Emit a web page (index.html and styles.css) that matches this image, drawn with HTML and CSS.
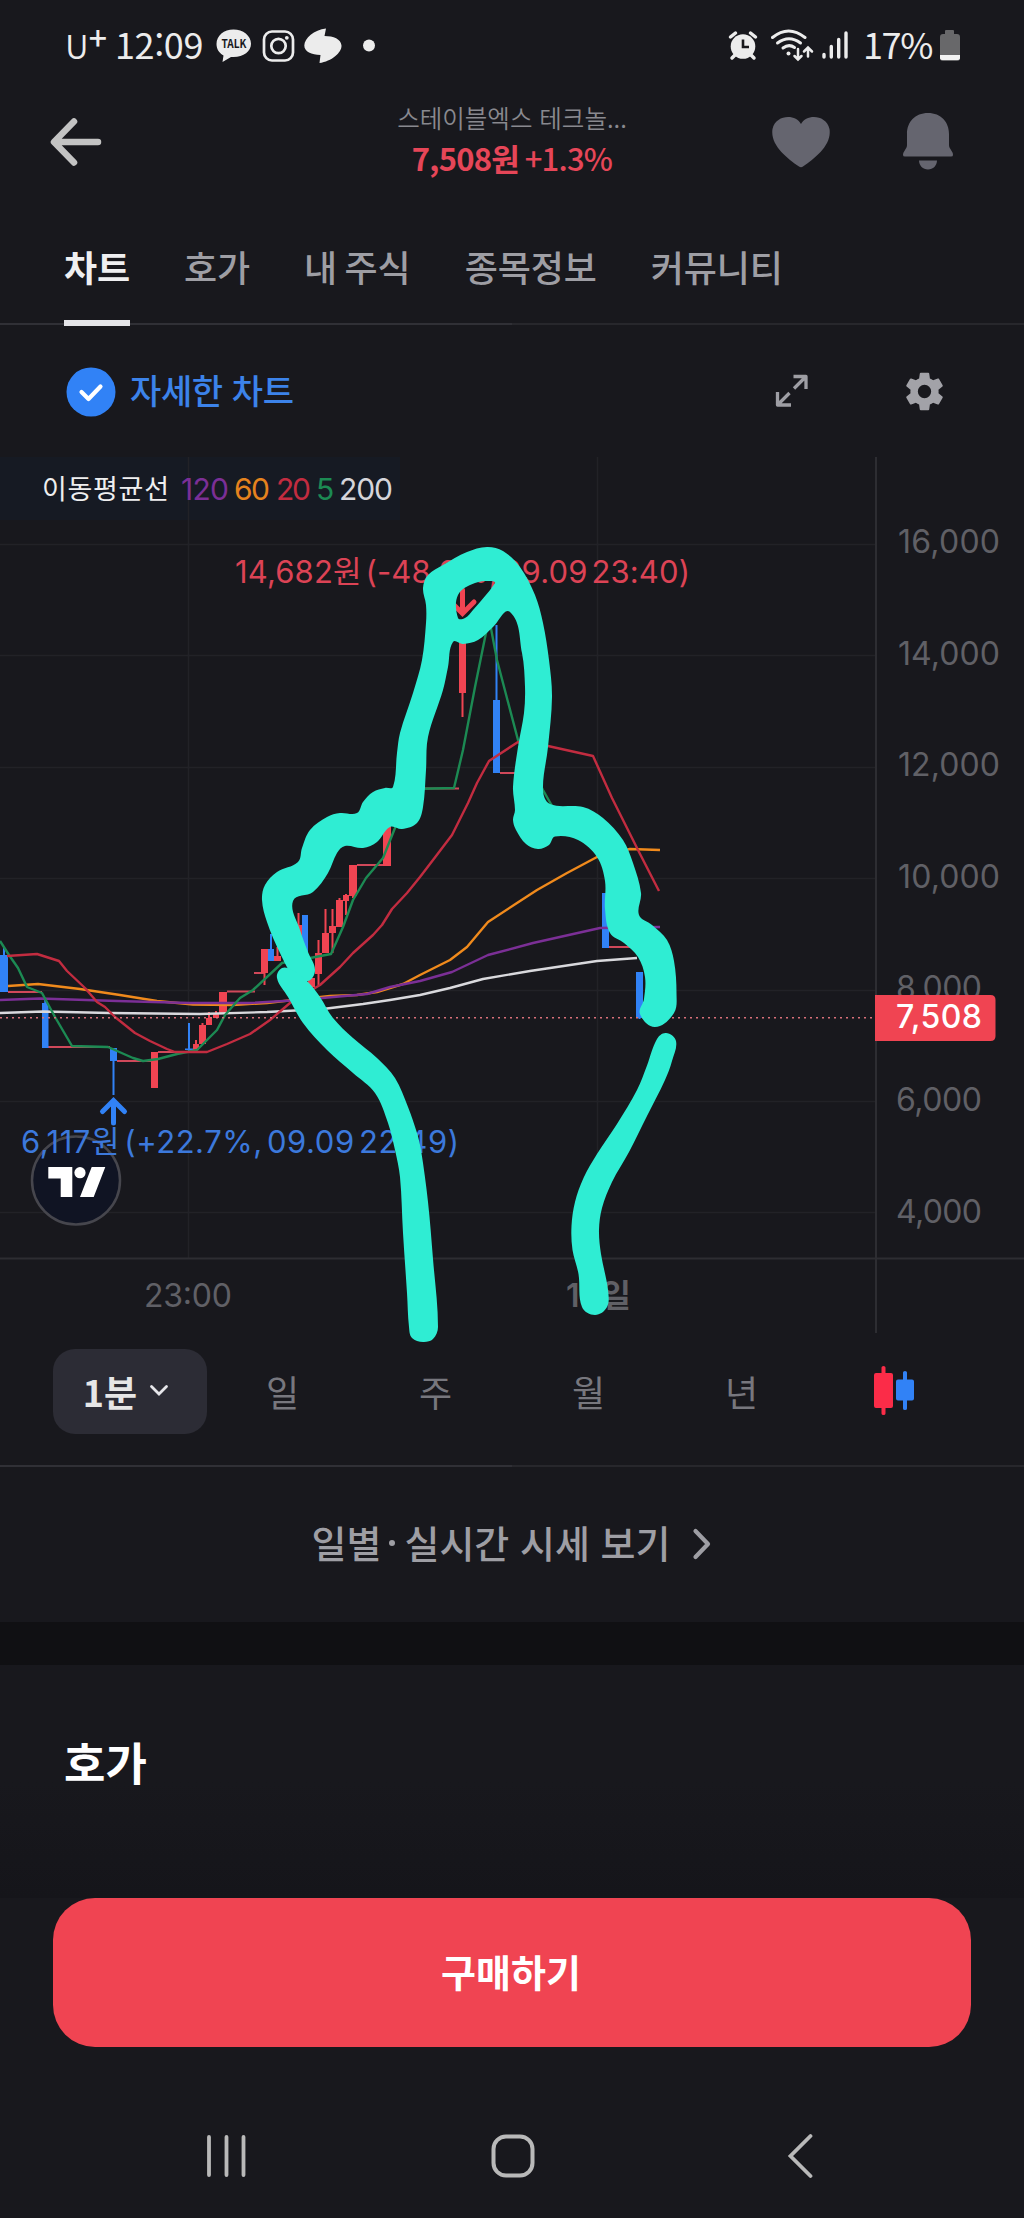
FILE: index.html
```html
<!DOCTYPE html>
<html lang="ko">
<head>
<meta charset="utf-8">
<title>차트</title>
<link rel="stylesheet" href="styles.css">
</head>
<body>
<div class="screen">
  <div class="status">
    <span class="carrier">U<sup>+</sup></span>
    <span class="clock">12:09</span>
    <svg class="notices" width="166" height="40" viewBox="212 25 166 40">
      <path fill="#ececec" d="M233.500 29.500C224 29.500 216.500 35.500 216.500 44c0 5 2.500 9 7 11.500L222.500 62l8.500-5c11.500 1 20-5 20-13.200C251 35.500 243 29.500 233.500 29.500z"/>
      <text x="221.500" y="48" class="talk" textLength="25" lengthAdjust="spacingAndGlyphs">TALK</text>
      <g fill="none" stroke="#ececec" stroke-width="2.700"><rect x="264" y="31.500" width="29" height="29" rx="8"/><circle cx="278.500" cy="46" r="7.200"/></g>
      <circle cx="286.800" cy="37.800" r="1.900" fill="#ececec"/>
      <path fill="#ececec" d="M326 28.500L324.500 36c9 0 16.500 3 17 9.500c.5 7-10 16-22 17.500L320.500 55c-9 0-16.200-3.500-16.200-9.500C304.500 38 314 30 326 28.500z"/>
      <circle cx="369" cy="45.500" r="6" fill="#ececec"/>
    </svg>
    <svg class="signals" width="122" height="40" viewBox="728 25 122 40">
      <g fill="#ececec"><circle cx="743" cy="46.500" r="12.300"/></g>
      <path d="M735 55l-3 3M751 55l3 3M730.500 37l5-4M755.500 37l-5-4" stroke="#ececec" stroke-width="3.500" stroke-linecap="round"/>
      <path d="M743 39.500v7.500h6" fill="none" stroke="#18181c" stroke-width="2.600"/>
      <g fill="none" stroke="#ececec" stroke-width="3" stroke-linecap="round"><path d="M772.500 37.500q16-13 32.500 0"/><path d="M777.500 43q11.500-8.500 23 0"/><path d="M783 48q6-4.500 11.500-.5"/></g>
      <circle cx="788.500" cy="53.500" r="2" fill="#ececec"/>
      <path d="M798 49v10M794.500 56l3.500 3.500 3.500-3.500M808 56.500v-8.500M804 51.500l4-4 4 4" fill="none" stroke="#ececec" stroke-width="2.500" stroke-linecap="round"/>
      <path d="M824 54.500v2.500M831.300 46.500v10.500M838.700 39.500v17.500M846 33v24" stroke="#ececec" stroke-width="3.400" stroke-linecap="round"/>
    </svg>
    <span class="charge">17%</span>
    <svg class="battery" width="22" height="32" viewBox="0 0 22 32"><path fill="#68686a" d="M6 1q0-1 1-1h7q1 0 1 1v3h3q3 0 3 3v21q0 3-3 3H4q-3 0-3-3V7q0-3 3-3h2z"/><path fill="#f2f2f2" d="M1 25h20v3q0 2-3 2H4q-3 0-3-2z"/></svg>
  </div>

  <header class="top">
    <svg width="54" height="50" viewBox="0 0 54 50"><path d="M48 25H5M24 4.500L4 25l20 20.500" fill="none" stroke="#c3c3c3" stroke-width="6.500" stroke-linecap="round" stroke-linejoin="round"/></svg>
    <div class="stock"><div class="name">스테이블엑스 테크놀...</div><div class="quote"><b>7,508원</b> <span>+1.3%</span></div></div>
    <div class="actions">
      <svg width="58" height="52" viewBox="0 0 58 52"><path fill="#65656f" d="M29 8C24-2 4-2 .5 13C-2 29 15 42 27 50.500Q29 51.800 31 50.500C43 42 60 29 57.500 13C54-2 34-2 29 8z"/></svg>
      <svg width="52" height="58" viewBox="0 0 52 58"><path fill="#65656f" d="M26 0C13 0 5 9 5 21v11c0 4-4 6-4 10q0 1.500 2 1.500h46q2 0 2-1.500c0-4-4-6-4-10V21C47 9 39 0 26 0zM17 47.500h18c0 5-4 9-9 9s-9-4-9-9z"/></svg>
    </div>
  </header>

  <nav class="tabs"><span class="tab on">차트</span><span class="tab">호가</span><span class="tab">내 주식</span><span class="tab">종목정보</span><span class="tab">커뮤니티</span></nav>

  <div class="tools">
    <svg width="50" height="50" viewBox="0 0 50 50"><circle cx="25" cy="25" r="24.500" fill="#3182f6"/><path d="M15.500 25l7 7L34.500 19.500" fill="none" stroke="#fff" stroke-width="4.200" stroke-linecap="round" stroke-linejoin="round"/></svg>
    <span class="detail">자세한 차트</span>
    <svg class="expand" width="34" height="34" viewBox="0 0 34 34"><g fill="none" stroke="#9e9ea4" stroke-width="3.300" stroke-linejoin="round"><path d="M18.500 2.500h12.500v12.500M19 14.500L31 2.500"/><path d="M2.500 18v13H16M2.500 31L14.500 19"/></g></svg>
    <svg class="gear" width="47" height="47" viewBox="0 0 24 24"><path fill="#a2a2a8" d="M19.140 12.940c.04-.3.06-.61.06-.94 0-.32-.02-.64-.07-.94l2.030-1.580c.18-.14.23-.41.12-.61l-1.920-3.320c-.12-.22-.37-.29-.59-.22l-2.390.96c-.5-.38-1.030-.7-1.620-.94l-.36-2.540c-.04-.24-.24-.41-.48-.41h-3.840c-.24 0-.43.17-.47.41l-.36 2.540c-.59.24-1.130.57-1.620.94l-2.390-.96c-.22-.08-.47 0-.59.22L2.740 8.870c-.12.21-.08.47.12.61l2.030 1.580c-.05.3-.09.63-.09.94s.02.64.07.94l-2.030 1.580c-.18.14-.23.41-.12.61l1.920 3.320c.12.22.37.29.59.22l2.390-.96c.5.38 1.030.7 1.620.94l.36 2.540c.05.24.24.41.48.41h3.840c.24 0 .44-.17.47-.41l.36-2.540c.59-.24 1.130-.56 1.620-.94l2.390.96c.22.08.47 0 .59-.22l1.920-3.320c.12-.22.07-.47-.12-.61l-2.010-1.580zM12 15.400a3.400 3.400 0 1 1 0-6.800 3.400 3.400 0 0 1 0 6.800z"/></svg>
  </div>

  <svg class="chart" width="1024" height="876" viewBox="0 457 1024 876">
    <path class="legend-bg" d="M0 457h400v63H0z"/>
    <path class="grid" d="M0 544.500h876M0 655.500h876M0 767.500h876M0 878.500h876M0 990.500h876M0 1101.500h876M0 1212.500h876M188.500 457v801M597.500 457v801"/>
    <path class="axis" d="M0 1258.500h1024M876 457v876"/>
    <g id="candles"></g>
    <g class="ma">
      <polyline stroke="#d9d9dd" points="0,1013 43,1011.500 110,1013 200,1014 267,1012 323,1009 363,1004 390,1000 420,995 450,988 483,979 530,971 597,961 637,958"/>
      <polyline stroke="#f08a1c" points="8,986 38,984 80,989 120,995 157,1001 193,1004.500 233,1005 267,1003 293,1000 330,996 357,995 377,992 403,984 420,975 430,970 450,960 467,947 488,922 517,903 537,890 567,873 597,857 630,849 660,850"/>
      <polyline stroke="#7b2f96" points="0,1000 40,998.500 117,1001 190,1003 250,1003 300,1000 367,994 390,987 420,981 452,972 488,955 533,943 600,928 660,927"/>
      <polyline stroke="#1c8a53" points="0,941 9,955 18,968 27,987 42,993 55,1017 72,1046 108,1047 133,1058 143,1061 158,1059 177,1054 197,1050 217,1030 225,1015 240,998 253,990 282,963 310,958 331,954 343,927 353,900 366,878 383,858 395,828 412,789 454,788 463,750 475,687 489,618 497,660 503,683 518,740 543,790 560,820"/>
      <polyline stroke="#c22c40" points="7,956 37,954 59,961 67,971 85,988 97,1002 105,1007 115,1017 135,1033 150,1041 167,1049 175,1052 207,1052 227,1044 250,1034 270,1020 290,1003 320,985 340,967 353,953 373,935 382,925 392,909 407,893 420,877 433,860 452,835 468,803 477,783 489,761 518,742 548,746 593,756 612,798 628,830 638,850 659,891"/>
    </g>
    <path class="last" d="M0 1017.700h876"/>
    <g class="mark up"><path d="M462.500 590v22M451 602l11.500 11.500 11.500-11.500"/></g>
    <g class="mark down"><path d="M113.500 1123v-22M102.500 1111.500l11-11 11 11"/></g>
    <circle cx="76" cy="1180.500" r="44" fill="#101423" stroke="#46464d" stroke-width="2.500"/>
    <path fill="#fff" d="M48.300 1167h24v30H60.700v-18.500H48.300zM91.700 1167h13.600L93.700 1197H80z"/><circle cx="80" cy="1172.700" r="5.600" fill="#fff"/>
    <g class="num">
      <text class="peak" x="235" y="583" fill="#dc4355" textLength="455">14,682원 (-48.9%, 09.09 23:40)</text>
      <text class="peak" x="21" y="1153" fill="#3c79dc" textLength="438">6,117원 (+22.7%, 09.09 22:49)</text>
      <text class="ma-name" x="42" y="499" textLength="127">이동평균선</text>
      <text x="181" y="499.500" fill="#7b2f96" textLength="48">120</text>
      <text x="234" y="499.500" fill="#e5831e" textLength="36">60</text>
      <text x="276" y="499.500" fill="#c22c40" textLength="35">20</text>
      <text x="316" y="499.500" fill="#1c8a53">5</text>
      <text x="339" y="499.500" fill="#d5d5da" textLength="54">200</text>
    </g>
    <g class="scale">
      <text x="898" y="553" textLength="102">16,000</text>
      <text x="898" y="665" textLength="102">14,000</text>
      <text x="898" y="776" textLength="102">12,000</text>
      <text x="898" y="888" textLength="102">10,000</text>
      <text x="896" y="999" textLength="86">8,000</text>
      <text x="896" y="1111" textLength="86">6,000</text>
      <text x="896" y="1223" textLength="86">4,000</text>
      <text x="144" y="1307" textLength="88">23:00</text>
      <text x="566" y="1307" textLength="65" class="day">10일</text>
    </g>
    <path fill="#f04452" d="M875 995h115.500q5 0 5 5v36q0 5-5 5H875z"/>
    <text class="price" x="896" y="1028" textLength="86">7,508</text>
    <path id="brush" fill="#2fedd3" fill-rule="evenodd"/>
  </svg>

  <div class="periods">
    <span class="period on">1분<svg width="20" height="13" viewBox="0 0 20 13"><path d="M2.500 2.500L10 10l7.500-7.500" fill="none" stroke="#e6e6ea" stroke-width="2.800" stroke-linecap="round"/></svg></span>
    <span class="period">일</span><span class="period">주</span><span class="period">월</span><span class="period">년</span>
    <span class="period kind"><svg width="42" height="50" viewBox="0 0 42 50"><path fill="#fb2c48" d="M8.500 1.500q0-1.500 2-1.500t2 1.500V7H18q2 0 2 2v31q0 2-2 2h-5.500v5.500q0 1.500-2 1.500t-2-1.500V42H3q-2 0-2-2V9q0-2 2-2h5.500z"/><path fill="#3182f6" d="M30 6.500q0-1.500 2-1.500t2 1.500V13.500h5q2 0 2 2v17q0 2-2 2h-5V42.500q0 1.500-2 1.500t-2-1.500V34.500H25q-2 0-2-2v-17q0-2 2-2h5z"/></svg></span>
  </div>

  <div class="more"><span>일별<i></i>실시간 시세 보기</span><svg width="20" height="32" viewBox="0 0 20 32"><path d="M3.500 3L16 16 3.500 29" fill="none" stroke="#9e9ea4" stroke-width="4.200" stroke-linecap="round" stroke-linejoin="round"/></svg></div>
  <div class="band"></div>
  <h2 class="section">호가</h2>
  <div class="cta"><button class="buy">구매하기</button></div>
  <div class="system">
    <svg width="40" height="44" viewBox="0 0 40 44"><path d="M3 3v38M20.500 3v38M37.500 3v38" stroke="#b9b9b9" stroke-width="3.800" stroke-linecap="round"/></svg>
    <svg width="44" height="44" viewBox="0 0 44 44"><rect x="2.500" y="2.500" width="39" height="39" rx="12.500" fill="none" stroke="#b9b9b9" stroke-width="4"/></svg>
    <svg width="26" height="46" viewBox="0 0 26 46"><path d="M23.500 3L3.500 23l20 20" fill="none" stroke="#b9b9b9" stroke-width="3.800" stroke-linecap="round"/></svg>
  </div>
</div>
<script src="chart.js"></script>
</body>
</html>
```
FILE: styles.css
```css
* { box-sizing: border-box; }
body { margin: 0; background: #18181d; color: #ececec; font-family: "Noto Sans CJK KR", "Liberation Sans", sans-serif; }
svg { display: block; flex: none; }
.screen { width: 1024px; height: 2218px; overflow: hidden; display: flex; flex-direction: column; white-space: nowrap; }
.screen > * { flex: none; }

.status { height: 90px; padding-left: 65px; display: flex; align-items: center; font-size: 36px; line-height: 36px; }
.status span { height: 40px; }
.carrier { width: 50px; font-size: 33px; font-weight: 350; line-height: 41px; }
.carrier sup { font-size: 32px; line-height: 0; vertical-align: 9px; font-weight: 500; }
.clock { width: 97px; letter-spacing: -0.4px; }
.signals { margin-left: 350px; }
.charge { width: 76px; margin-left: 13px; letter-spacing: -1.4px; }
.battery { margin-left: 0; margin-top: 2px; }
.talk { font: 700 12px "Noto Sans CJK KR", sans-serif; fill: #18181c; }

.top { height: 110px; padding: 0 48px 6px 50px; display: grid; grid-template-columns: 1fr 240px 1fr; align-items: center; }
.stock { text-align: center; padding-bottom: 5px; margin-left: -2px; }
.name { font-size: 24.500px; line-height: 37px; color: #89898f; font-weight: 350; }
.quote { font-size: 31px; line-height: 44px; color: #e64658; letter-spacing: -0.8px; font-weight: 500; word-spacing: -2px; }
.actions { display: flex; justify-content: flex-end; align-items: center; gap: 72px; padding-right: 22px; }

.tabs { height: 126px; padding: 0 64px; display: flex; gap: 54px; font-size: 36px; word-spacing: -2.500px; letter-spacing: -0.1px; color: #9e9ea4; font-weight: 500; background: linear-gradient(90deg, #303036 50%, #27272c 50%) 0 123px / 100% 2px no-repeat; }
.tab { height: 126px; line-height: 132px; }
.tab.on { color: #efeff1; font-weight: 700; background: linear-gradient(#e4e4e8, #e4e4e8) 0 120px / 100% 6px no-repeat; }

.tools { height: 131px; padding-left: 66px; display: flex; align-items: center; }
.detail { width: 180px; margin: -4px 0 0 14px; font-size: 34px; letter-spacing: -0.4px; font-weight: 500; color: #3c83ea; }
.expand { margin: -1px 0 0 465px; }
.gear { margin: -1px 0 0 92px; }

.chart { overflow: visible; }
.chart text { font-family: Inter, "Noto Sans CJK KR", sans-serif; }
.legend-bg { fill: #161a23; }
.grid, .axis { fill: none; stroke: #222227; stroke-width: 1.500; }
.axis { stroke: #2d2d32; stroke-width: 2; }
.ma polyline { fill: none; stroke-width: 2.400; stroke-linejoin: round; }
.last { stroke: #d9707a; stroke-width: 1.600; stroke-dasharray: 2 4; }
.mark { fill: none; stroke-width: 5; stroke-linecap: round; }
.up { stroke: #f04452; }
.down { stroke: #3182f6; }
.num { font-size: 30px; }
.peak { font-size: 31px; word-spacing: -5px; }
.chart .ma-name { font: 400 27px "Noto Sans CJK KR", sans-serif; fill: #efefef; }
.scale { font-size: 32px; fill: #606066; }
.scale .day { font-weight: 600; }
.price { font-size: 32px; font-weight: 450; fill: #fff; }

.periods { height: 134px; padding: 16px 53px 31px; display: grid; grid-template-columns: repeat(6, 153px); border-bottom: 2px solid #27272c; border-image: linear-gradient(90deg, #303036 50%, #27272c 50%) 1; }
.period { display: flex; align-items: center; justify-content: center; font-size: 36px; color: #77777e; font-weight: 400; padding-bottom: 2px; }
.period.on { width: 154px; background: #2c2c35; border-radius: 22px; color: #e6e6e6; font-weight: 700; gap: 12px; padding-right: 8px; }
.period.kind { padding-right: 2px; }

.more { height: 155px; display: flex; align-items: center; justify-content: center; gap: 22px; padding-bottom: 1px; font-size: 38px; font-weight: 500; color: #9e9ea4; }
.more span { margin-top: -6px; }
.more i { display: inline-block; width: 6px; height: 6px; margin: 0 9px 12px 8px; border-radius: 50%; background: #9e9ea4; }
.band { height: 43px; background: #101013; }
.section { height: 233px; margin: 0; padding: 64px 64px 0; font-size: 45px; line-height: 66px; font-weight: 700; color: #fff; background: linear-gradient(#18181d 50%, #15151a); }
.cta { height: 149px; padding: 0 53px; }
.buy { display: block; width: 918px; height: 149px; border: 0; border-radius: 42px; background: #f04452; color: #fff; font: 700 38px "Noto Sans CJK KR", sans-serif; padding: 0 2px 5px 0; }
.system { height: 170px; display: flex; align-items: center; padding: 47px 0 0 206px; }
.system svg:nth-child(2) { margin-left: 245px; }
.system svg:nth-child(3) { margin-left: 252px; }
```
FILE: chart.js
```js
const RED = '#f04452', BLUE = '#3182f6', TICK = '#d0485a';
// [left, right, open/close top, bottom, wick top, wick bottom, colour]
const candles = [
  [0, 8, 955, 992, 947, 992, BLUE], [42, 48.5, 1003, 1048, 1000, 1048, BLUE],
  [110, 117, 1048, 1061, 1048, 1095, BLUE], [151, 158, 1052, 1088, 1052, 1088, RED],
  [185, 193, 1048.5, 1050, 1023, 1051, BLUE], [193, 199, 1044, 1050, 1040, 1051, RED],
  [199, 206, 1025, 1044, 1023, 1044, RED], [206, 212, 1018, 1025, 1012, 1025, RED],
  [213, 219, 1013, 1018, 1011, 1018, RED], [219, 227, 992, 1014, 992, 1014, RED],
  [261, 268, 949, 973, 949, 985, RED], [268, 274, 949, 961, 934, 961, BLUE],
  [274, 281, 956, 961, 947, 961, RED], [295, 302, 925, 947, 913, 950, RED],
  [302, 308, 915, 960, 915, 960, BLUE], [308, 315, 978, 987, 978, 991, RED],
  [315, 322, 953, 974, 940, 985, RED], [322, 329, 933, 953, 909, 953, RED],
  [329, 336, 926, 933, 909, 953, RED], [336, 343, 900, 927, 898, 927, RED],
  [343, 349, 895, 901, 894, 915, RED], [349, 357, 865, 896, 865, 898, RED],
  [383, 391, 820, 866, 820, 866, RED], [459, 466, 630, 693, 620, 717, RED],
  [493, 500, 700, 773, 625, 773, BLUE], [602, 609, 893, 948, 893, 948, BLUE],
  [636, 643, 972, 1018, 972, 1019, BLUE]
];
// Minutes without a trade: [from, to, price level]
const flats = [[8, 42, 992], [48, 110, 1047], [117, 152, 1061], [158, 193, 1052], [227, 255, 991.5],
  [254, 265, 973], [357, 383, 865], [425, 459, 788.5], [500, 518, 773], [609, 632, 947]];
let s = '';
for (const [a, b, y] of flats) s += `<rect x="${a}" y="${y - 1}" width="${b - a}" height="2" fill="${TICK}"/>`;
for (const [l, r, t, b, wt, wb, c] of candles)
  s += `<rect x="${l}" y="${t}" width="${r - l}" height="${b - t}" fill="${c}"/><rect x="${(l + r) / 2 - 1}" y="${wt}" width="2" height="${wb - wt}" fill="${c}"/>`;
document.getElementById('candles').innerHTML = s;

// Closed outlines of the brush marks
const outlines = [
  '262,900 265,885 277,872 298,862 302,848 310,830 327,817 340,813 357,813 363,802 373,792 385,788 393,787 397,753 400,733 413,693 422,660 426,623 426,605 423,588 428,575 443,565 467,552 487,547 503,551 520,567 535,595 543,623 549,660 552,697 548,747 543,790 550,804 583,807 603,818 623,840 633,863 641,893 639,915 652,925 667,940 674,961 676.5,993 674,1013 655,1027 640,1014 644,999 645,977 638,957 624,943 610,933 605,909 605,881 597,857 578,840 555,836.5 549,845 538,849 526,844 516,830 513,820 515,810 513,787 518,747 524,713 525,687 522,653 510,612 493,627 478,640 463,644 453,642 448,667 443,690 428,737 426,770 423,807 417,823 402,829 390,827 377,842 363,848 345,846 337,853 328,873 313,892 293,901 300,930 308,952 315,970 308,981 293,975 280,953 267,922',
  '458,595 475,583 492,581 495,583 473,610 465,618 458,618',
  '277,978 282,968 292,970 308,982 320,997 333,1018 353,1038 377,1058 395,1078 408,1107 417,1133 421,1150 428,1202 433,1259 438,1327 433,1339 423,1342 412,1338 409,1327 407,1293 403,1233 400,1177 395,1150 388,1123 375,1093 353,1073 327,1050 303,1023 288,997',
  '657,1039 666,1033 676,1041 672,1061 665,1080 647,1116 629,1152 612,1182 602,1208 599,1230 601,1254 608,1290 607,1307 595,1315 582,1307 578.500,1274 572.500,1250 571.500,1226 575,1202 583.500,1178 597,1154 617,1124 637,1090 647,1065.500'
];
function smooth(str) {
  const p = str.split(' ').map(q => q.split(',').map(Number)), n = p.length;
  const handle = (at, from, to, len) => {
    const dx = to[0] - from[0], dy = to[1] - from[1], k = len * 0.34 / (Math.hypot(dx, dy) || 1);
    return `${at[0] + dx * k},${at[1] + dy * k}`;
  };
  let d = `M${p[0]}`;
  for (let i = 0; i < n; i++) {
    const a = p[(i + n - 1) % n], b = p[i], c = p[(i + 1) % n], e = p[(i + 2) % n];
    const len = Math.hypot(c[0] - b[0], c[1] - b[1]);
    d += `C${handle(b, a, c, len)} ${handle(c, e, b, len)} ${c}`;
  }
  return d + 'Z';
}
// The left leg overlaps the body, so it gets its own path
const brush = document.getElementById('brush');
brush.setAttribute('d', smooth(outlines[0]) + smooth(outlines[1]));
for (const o of outlines.slice(2)) {
  const leg = brush.cloneNode();
  leg.removeAttribute('id');
  leg.setAttribute('d', smooth(o));
  brush.after(leg);
}
```
